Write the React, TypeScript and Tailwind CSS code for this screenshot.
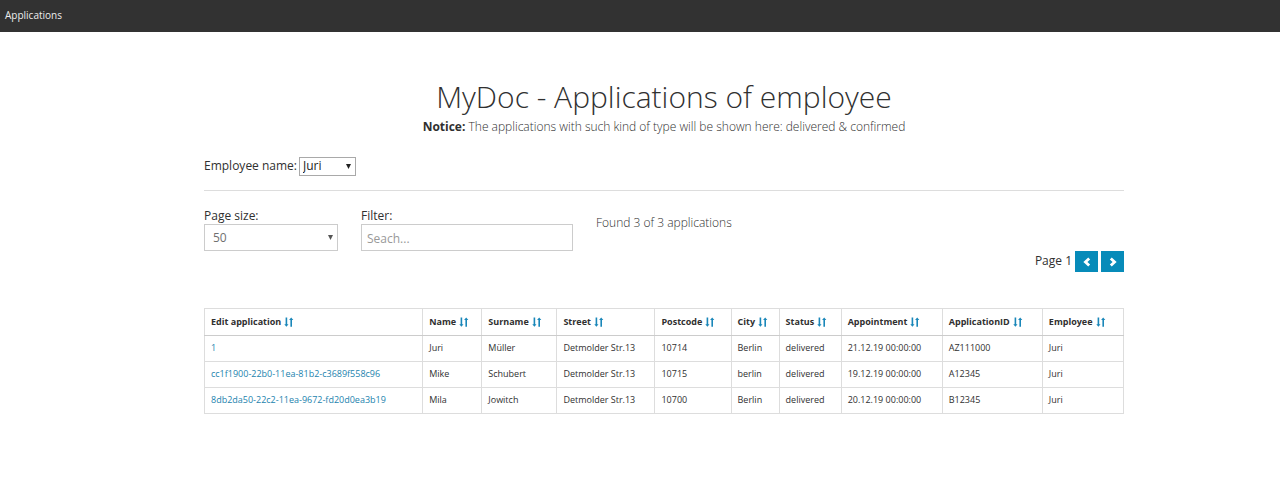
import React from "react";

const columns = [
  { label: "Edit application", width: "w-[218px]" },
  { label: "Name", width: "w-[59px]" },
  { label: "Surname", width: "w-[75px]" },
  { label: "Street", width: "w-[98px]" },
  { label: "Postcode", width: "w-[76px]" },
  { label: "City", width: "w-[48px]" },
  { label: "Status", width: "w-[62px]" },
  { label: "Appointment", width: "w-[101px]" },
  { label: "ApplicationID", width: "w-[100px]" },
  { label: "Employee", width: "w-[81px]" },
];

const rows = [
  ["1", "Juri", "Müller", "Detmolder Str.13", "10714", "Berlin", "delivered", "21.12.19 00:00:00", "AZ111000", "Juri"],
  ["cc1f1900-22b0-11ea-81b2-c3689f558c96", "Mike", "Schubert", "Detmolder Str.13", "10715", "berlin", "delivered", "19.12.19 00:00:00", "A12345", "Juri"],
  ["8db2da50-22c2-11ea-9672-fd20d0ea3b19", "Mila", "Jowitch", "Detmolder Str.13", "10700", "Berlin", "delivered", "20.12.19 00:00:00", "B12345", "Juri"],
];

function SortIcon() {
  return (
    <svg viewBox="0 0 10 10" className="h-[10px] w-[10px] shrink-0" fill="#1a87b9" aria-hidden="true">
      <path d="M1.6 0.5h1.6v6.8h1.3L2.4 9.7 0.3 7.3h1.3z" />
      <path d="M6.4 9.7H8V2.9h1.3L7.2 0.5 5.1 2.9h1.3z" />
    </svg>
  );
}

function Chevron({ direction }: { direction: "left" | "right" }) {
  return (
    <svg viewBox="0 0 10 10" className="h-[10px] w-[10px]" fill="none" stroke="#fff" strokeWidth="2.8" aria-hidden="true">
      <path d={direction === "left" ? "M7.2 1.4L3.4 5l3.8 3.6" : "M2.8 1.4L6.6 5 2.8 8.6"} />
    </svg>
  );
}

function Caret({ className }: { className: string }) {
  return (
    <svg viewBox="0 0 5 5" className={`pointer-events-none absolute right-[5px] h-[5px] w-[5px] ${className}`} fill="currentColor" aria-hidden="true">
      <path d="M0 0h5L2.5 5z" />
    </svg>
  );
}

export default function App() {
  return (
    <div className="bg-white font-['Open_Sans',sans-serif] text-[#303030]">
      <nav className="flex h-8 items-center bg-[#323232] px-[5px] pb-[2px]">
        <a href="#applications" className="text-[10px] leading-4 text-[#ededed]">Applications</a>
      </nav>

      <main className="pt-11 pr-[156px] pb-12 pl-[204px]">
        <header className="text-center">
          <h1 className="text-[30px] leading-[42px] font-light">MyDoc - Applications of employee</h1>
          <p className="text-[12px] leading-[18px] font-light">
            <strong className="font-bold">Notice:</strong> The applications with such kind of type will be shown here: delivered &amp; confirmed
          </p>
        </header>

        <div className="mt-5 flex h-5 items-center gap-[2px] text-[12px]">
          <label htmlFor="employee">Employee name:</label>
          <div className="relative text-[#222]">
            <select id="employee" defaultValue="Juri" className="block h-[19px] w-[57px] appearance-none border border-[#a9a9a9] bg-white pl-[3px] text-[12px] leading-4">
              <option>Juri</option>
            </select>
            <Caret className="top-[7px]" />
          </div>
        </div>

        <hr className="mt-[14px] border-[#dddddd]" />

        <div className="mt-4 flex gap-[23px] text-[12px] leading-4">
          <div className="w-[134px]">
            <label htmlFor="size" className="block pt-px">Page size:</label>
            <div className="relative text-[#555]">
              <select id="size" defaultValue="50" className="block h-[27px] w-full appearance-none border border-[#ccc] bg-white pt-px pl-2 text-[12px] text-[#707070]">
                <option>50</option>
              </select>
              <Caret className="top-[11px]" />
            </div>
          </div>
          <div className="w-[212px]">
            <label htmlFor="filter" className="block pt-px">Filter:</label>
            <input id="filter" type="text" placeholder="Seach..." className="block h-[27px] w-full border border-[#ccc] px-[5px] pt-px text-[12px] placeholder:text-[#999]" />
          </div>
          <p className="pt-2 font-light">Found 3 of 3 applications</p>
        </div>

        <div className="flex items-center justify-end gap-[3px] text-[12px]">
          <span className="pb-px">Page 1</span>
          <button type="button" aria-label="Previous page" className="flex h-[21px] w-[23px] items-center justify-center bg-[#078bb9]">
            <Chevron direction="left" />
          </button>
          <button type="button" aria-label="Next page" className="flex h-[21px] w-[23px] items-center justify-center bg-[#078bb9]">
            <Chevron direction="right" />
          </button>
        </div>

        <table className="mt-9 w-full table-fixed border-collapse text-left text-[9px] leading-4">
          <thead>
            <tr className="h-[27px]">
              {columns.map((column) => (
                <th key={column.label} className={`border border-b-[#ccc] border-[#ddd] pb-px pl-[6px] font-bold whitespace-nowrap ${column.width}`}>
                  <div className="flex items-center gap-[3px]">
                    {column.label}
                    <SortIcon />
                  </div>
                </th>
              ))}
            </tr>
          </thead>
          <tbody>
            {rows.map((row) => (
              <tr key={row[0]} className="h-[26px]">
                {row.map((cell, index) => (
                  <td key={index} className="border border-[#ddd] pb-px pl-[6px] whitespace-nowrap">
                    {index === 0 ? <a href={`#${cell}`} className="text-[#2383ae]">{cell}</a> : cell}
                  </td>
                ))}
              </tr>
            ))}
          </tbody>
        </table>
      </main>
    </div>
  );
}
